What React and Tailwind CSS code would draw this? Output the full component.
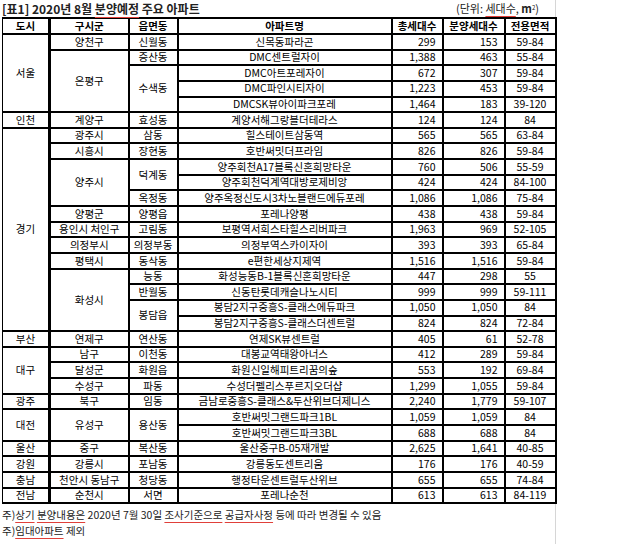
import React from "react";

const rows = [
  { si: ["서울", 5], gu: ["양천구", 1], dong: ["신월동", 1], apt: "신목동파라곤", t: "299", b: "153", a: "59-84" },
  { gu: ["은평구", 4], dong: ["증산동", 1], apt: "DMC센트럴자이", t: "1,388", b: "463", a: "55-84" },
  { dong: ["수색동", 3], apt: "DMC아트포레자이", t: "672", b: "307", a: "59-84" },
  { apt: "DMC파인시티자이", t: "1,223", b: "453", a: "59-84" },
  { apt: "DMCSK뷰아이파크포레", t: "1,464", b: "183", a: "39-120" },
  { si: ["인천", 1], gu: ["계양구", 1], dong: ["효성동", 1], apt: "계양서해그랑블더테라스", t: "124", b: "124", a: "84" },
  { si: ["경기", 13], gu: ["광주시", 1], dong: ["삼동", 1], apt: "힐스테이트삼동역", t: "565", b: "565", a: "63-84" },
  { gu: ["시흥시", 1], dong: ["장현동", 1], apt: "호반써밋더프라임", t: "826", b: "826", a: "59-84" },
  { gu: ["양주시", 3], dong: ["덕계동", 2], apt: "양주회천A17블록신혼희망타운", t: "760", b: "506", a: "55-59" },
  { apt: "양주회천덕계역대방로제비앙", t: "424", b: "424", a: "84-100" },
  { dong: ["옥정동", 1], apt: "양주옥정신도시3차노블랜드에듀포레", t: "1,086", b: "1,086", a: "75-84" },
  { gu: ["양평군", 1], dong: ["양평읍", 1], apt: "포레나양평", t: "438", b: "438", a: "59-84" },
  { gu: ["용인시 처인구", 1], dong: ["고림동", 1], apt: "보평역서희스타힐스리버파크", t: "1,963", b: "969", a: "52-105" },
  { gu: ["의정부시", 1], dong: ["의정부동", 1], apt: "의정부역스카이자이", t: "393", b: "393", a: "65-84" },
  { gu: ["평택시", 1], dong: ["동삭동", 1], apt: "e편한세상지제역", t: "1,516", b: "1,516", a: "59-84" },
  { gu: ["화성시", 4], dong: ["능동", 1], apt: "화성능동B-1블록신혼희망타운", t: "447", b: "298", a: "55" },
  { dong: ["반월동", 1], apt: "신동탄롯데캐슬나노시티", t: "999", b: "999", a: "59-111" },
  { dong: ["봉담읍", 2], apt: "봉담2지구중흥S-클래스에듀파크", t: "1,050", b: "1,050", a: "84" },
  { apt: "봉담2지구중흥S-클래스더센트럴", t: "824", b: "824", a: "72-84" },
  { si: ["부산", 1], gu: ["연제구", 1], dong: ["연산동", 1], apt: "연제SK뷰센트럴", t: "405", b: "61", a: "52-78" },
  { si: ["대구", 3], gu: ["남구", 1], dong: ["이천동", 1], apt: "대봉교역태왕아너스", t: "412", b: "289", a: "59-84" },
  { gu: ["달성군", 1], dong: ["화원읍", 1], apt: "화원신일해피트리꿈의숲", t: "553", b: "192", a: "69-84" },
  { gu: ["수성구", 1], dong: ["파동", 1], apt: "수성더펠리스푸르지오더샵", t: "1,299", b: "1,055", a: "59-84" },
  { si: ["광주", 1], gu: ["북구", 1], dong: ["임동", 1], apt: "금남로중흥S-클래스&두산위브더제니스", t: "2,240", b: "1,779", a: "59-107" },
  { si: ["대전", 2], gu: ["유성구", 2], dong: ["용산동", 2], apt: "호반써밋그랜드파크1BL", t: "1,059", b: "1,059", a: "84" },
  { apt: "호반써밋그랜드파크3BL", t: "688", b: "688", a: "84" },
  { si: ["울산", 1], gu: ["중구", 1], dong: ["복산동", 1], apt: "울산중구B-05재개발", t: "2,625", b: "1,641", a: "40-85" },
  { si: ["강원", 1], gu: ["강릉시", 1], dong: ["포남동", 1], apt: "강릉동도센트리움", t: "176", b: "176", a: "40-59" },
  { si: ["충남", 1], gu: ["천안시 동남구", 1], dong: ["청당동", 1], apt: "행정타운센트럴두산위브", t: "655", b: "655", a: "74-84" },
  { si: ["전남", 1], gu: ["순천시", 1], dong: ["서면", 1], apt: "포레나순천", t: "613", b: "613", a: "84-119" },
];

const cell = "border-2 border-black p-0 leading-none whitespace-nowrap align-middle";
const ul = "underline decoration-[#e0403a] decoration-1 underline-offset-[3px]";

export default function App() {
  return (
    <div
      className="w-[640px] h-[544px] bg-white text-black"
      style={{ fontFamily: '"Noto Sans CJK KR", "Noto Sans", sans-serif' }}
    >
      <div className="w-[556px] h-full border-r border-[#d6d6d6] pl-[2px]">
        <div className="h-[17px] flex items-end justify-between pr-[16px]">
          <div className="text-[12px] font-bold leading-none pb-[2px] text-[#222]">
            [표1] 2020년 8월 <span className={ul}>분양예정</span> 주요 아파트
          </div>
          <div className="text-[11px] leading-none pb-[3px] text-[#222]">
            (단위: <span className={ul}>세대수</span>, <span className="font-bold">m</span>
            <sup className="text-[6px] relative -top-[3px]">2</sup>)
          </div>
        </div>
        <table className="border-collapse table-fixed w-[553px] text-[10.5px]">
          <colgroup>
            <col className="w-[47px]" />
            <col className="w-[79px]" />
            <col className="w-[49px]" />
            <col className="w-[214px]" />
            <col className="w-[51px]" />
            <col className="w-[62px]" />
            <col className="w-[51px]" />
          </colgroup>
          <thead>
            <tr className="h-[16px]">
              <th className={cell + " font-semibold border-l-1"}>도시</th>
              <th className={cell + " font-semibold border-l-3"}>구시군</th>
              <th className={cell + " font-semibold"}>읍면동</th>
              <th className={cell + " font-semibold"}>아파트명</th>
              <th className={cell + " font-semibold"}>총세대수</th>
              <th className={cell + " font-semibold"}>분양세대수</th>
              <th className={cell + " font-semibold"}>전용면적</th>
            </tr>
          </thead>
          <tbody>
            {rows.map((r, i) => (
              <tr key={i} className="h-[15.65px]">
                {r.si && (
                  <td rowSpan={r.si[1]} className={cell + " text-center border-l-1"}>
                    {r.si[0]}
                  </td>
                )}
                {r.gu && (
                  <td rowSpan={r.gu[1]} className={cell + " text-center border-l-3"}>
                    {r.gu[0]}
                  </td>
                )}
                {r.dong && (
                  <td rowSpan={r.dong[1]} className={cell + " text-center"}>
                    {r.dong[0]}
                  </td>
                )}
                <td className={cell + " text-center"}>{r.apt}</td>
                <td className={cell + " text-right pr-[6px]"}>{r.t}</td>
                <td className={cell + " text-right pr-[6px]"}>{r.b}</td>
                <td className={cell + " text-center"}>{r.a}</td>
              </tr>
            ))}
          </tbody>
        </table>
        <div className="text-[10.5px] leading-[16px] pt-[3px] text-[#222]">
          <div>
            주)<span className={ul}>상기</span> <span className={ul}>분양내용은</span> 2020년 7월 30일{" "}
            <span className={ul}>조사기준으로</span> <span className={ul}>공급자사정</span> 등에 따라 변경될 수 있음
          </div>
          <div>
            주)<span className={ul}>임대아파트</span> 제외
          </div>
        </div>
      </div>
    </div>
  );
}
